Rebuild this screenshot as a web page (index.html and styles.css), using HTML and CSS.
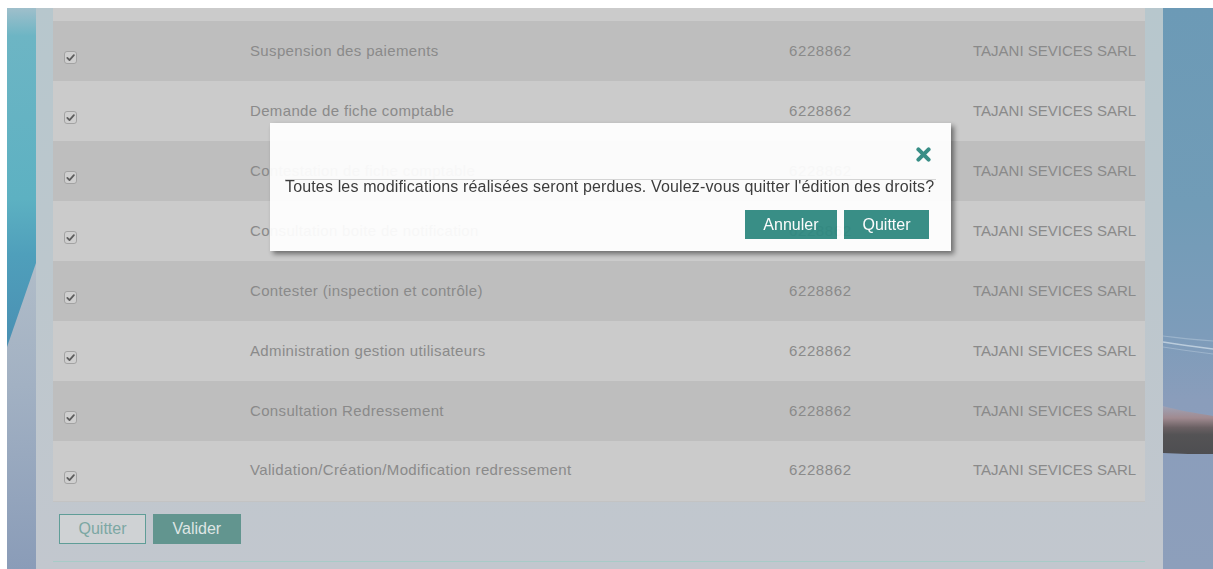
FILE: index.html
```html
<!DOCTYPE html>
<html lang="fr">
<head>
<meta charset="utf-8">
<title>Gestion des droits</title>
<link rel="stylesheet" href="styles.css">
</head>
<body>
<div class="page">
  <div class="scene scene-left" aria-hidden="true">
    <svg viewBox="0 0 29 561" preserveAspectRatio="none">
      <defs>
        <linearGradient id="sky-left" x1="0" y1="0" x2="0" y2="1">
          <stop offset="0" stop-color="#9fbfcb"/>
          <stop offset="0.05" stop-color="#6db5c4"/>
          <stop offset="0.34" stop-color="#5db1c2"/>
          <stop offset="0.44" stop-color="#4f9fbb"/>
          <stop offset="0.6" stop-color="#4a90b3"/>
        </linearGradient>
        <linearGradient id="ground-left" x1="0" y1="0" x2="0" y2="1">
          <stop offset="0" stop-color="#b0bcc8"/>
          <stop offset="0.4" stop-color="#a2b1c3"/>
          <stop offset="1" stop-color="#8a9cb8"/>
        </linearGradient>
      </defs>
      <rect width="29" height="561" fill="url(#sky-left)"/>
      <polygon points="29,255 29,561 0,561 0,339" fill="url(#ground-left)"/>
    </svg>
  </div>

  <main class="panel">
    <table class="rights">
      <colgroup>
        <col class="col-check">
        <col class="col-label">
        <col class="col-code">
        <col class="col-company">
      </colgroup>
      <tbody>
        <tr class="row-tail"><td colspan="4"></td></tr>
        <tr>
          <td class="cell-check"><span class="check"><svg viewBox="0 0 13 13"><rect x="0.5" y="0.5" width="12" height="12" rx="2.5" class="check-box"/><path d="M3.3 6.9 L5.5 9.1 L9.9 4.2" class="check-mark"/></svg></span></td>
          <td class="cell-label">Suspension des paiements</td>
          <td class="cell-code">6228862</td>
          <td>TAJANI SEVICES SARL</td>
        </tr>
        <tr>
          <td class="cell-check"><span class="check"><svg viewBox="0 0 13 13"><rect x="0.5" y="0.5" width="12" height="12" rx="2.5" class="check-box"/><path d="M3.3 6.9 L5.5 9.1 L9.9 4.2" class="check-mark"/></svg></span></td>
          <td class="cell-label">Demande de fiche comptable</td>
          <td class="cell-code">6228862</td>
          <td>TAJANI SEVICES SARL</td>
        </tr>
        <tr>
          <td class="cell-check"><span class="check"><svg viewBox="0 0 13 13"><rect x="0.5" y="0.5" width="12" height="12" rx="2.5" class="check-box"/><path d="M3.3 6.9 L5.5 9.1 L9.9 4.2" class="check-mark"/></svg></span></td>
          <td class="cell-label">Contestation de fiche comptable</td>
          <td class="cell-code">6228862</td>
          <td>TAJANI SEVICES SARL</td>
        </tr>
        <tr>
          <td class="cell-check"><span class="check"><svg viewBox="0 0 13 13"><rect x="0.5" y="0.5" width="12" height="12" rx="2.5" class="check-box"/><path d="M3.3 6.9 L5.5 9.1 L9.9 4.2" class="check-mark"/></svg></span></td>
          <td class="cell-label">Consultation boite de notification</td>
          <td class="cell-code">6228862</td>
          <td>TAJANI SEVICES SARL</td>
        </tr>
        <tr>
          <td class="cell-check"><span class="check"><svg viewBox="0 0 13 13"><rect x="0.5" y="0.5" width="12" height="12" rx="2.5" class="check-box"/><path d="M3.3 6.9 L5.5 9.1 L9.9 4.2" class="check-mark"/></svg></span></td>
          <td class="cell-label">Contester (inspection et contrôle)</td>
          <td class="cell-code">6228862</td>
          <td>TAJANI SEVICES SARL</td>
        </tr>
        <tr>
          <td class="cell-check"><span class="check"><svg viewBox="0 0 13 13"><rect x="0.5" y="0.5" width="12" height="12" rx="2.5" class="check-box"/><path d="M3.3 6.9 L5.5 9.1 L9.9 4.2" class="check-mark"/></svg></span></td>
          <td class="cell-label">Administration gestion utilisateurs</td>
          <td class="cell-code">6228862</td>
          <td>TAJANI SEVICES SARL</td>
        </tr>
        <tr>
          <td class="cell-check"><span class="check"><svg viewBox="0 0 13 13"><rect x="0.5" y="0.5" width="12" height="12" rx="2.5" class="check-box"/><path d="M3.3 6.9 L5.5 9.1 L9.9 4.2" class="check-mark"/></svg></span></td>
          <td class="cell-label">Consultation Redressement</td>
          <td class="cell-code">6228862</td>
          <td>TAJANI SEVICES SARL</td>
        </tr>
        <tr>
          <td class="cell-check"><span class="check"><svg viewBox="0 0 13 13"><rect x="0.5" y="0.5" width="12" height="12" rx="2.5" class="check-box"/><path d="M3.3 6.9 L5.5 9.1 L9.9 4.2" class="check-mark"/></svg></span></td>
          <td class="cell-label">Validation/Création/Modification redressement</td>
          <td class="cell-code">6228862</td>
          <td>TAJANI SEVICES SARL</td>
        </tr>
      </tbody>
    </table>

    <div class="actions">
      <button type="button" class="btn btn-outline">Quitter</button>
      <button type="button" class="btn btn-fill">Valider</button>
    </div>
    <div class="panel-foot"></div>
  </main>

  <div class="scene scene-right" aria-hidden="true">
    <svg viewBox="0 0 50 561" preserveAspectRatio="none">
      <defs>
        <linearGradient id="sky-right" x1="0" y1="0" x2="0" y2="1">
          <stop offset="0" stop-color="#6c9ab6"/>
          <stop offset="0.35" stop-color="#719cb7"/>
          <stop offset="0.58" stop-color="#7d9cba"/>
          <stop offset="0.7" stop-color="#8a9dbb"/>
          <stop offset="1" stop-color="#8d9fbb"/>
        </linearGradient>
        <linearGradient id="hand" x1="0" y1="0" x2="0" y2="1">
          <stop offset="0" stop-color="#9fa3b6"/>
          <stop offset="0.25" stop-color="#a08a90"/>
          <stop offset="0.45" stop-color="#6a6063"/>
          <stop offset="0.6" stop-color="#545355"/>
          <stop offset="1" stop-color="#4e4e51"/>
        </linearGradient>
      </defs>
      <rect width="50" height="561" fill="url(#sky-right)"/>
      <path d="M0 334 C18 337 34 339 50 341" class="streak"/>
      <path d="M0 339 C18 342 34 344 50 346" class="streak streak-soft"/>
      <path d="M0 328 C18 330 34 332 50 333" class="streak streak-soft"/>
      <path d="M0 398 C14 402 32 405 50 408 L50 446 C34 446 16 446 0 445 Z" fill="url(#hand)"/>
    </svg>
  </div>
</div>

<div class="modal" role="dialog" aria-modal="true">
  <div class="modal-head">
    <button type="button" class="modal-close" aria-label="Fermer">
      <svg viewBox="0 0 15 15"><path d="M2.4 2.4 L12.6 12.6 M12.6 2.4 L2.4 12.6"/></svg>
    </button>
  </div>
  <p class="modal-text">Toutes les modifications réalisées seront perdues. Voulez-vous quitter l'édition des droits?</p>
  <div class="modal-actions">
    <button type="button" class="modal-btn">Annuler</button>
    <button type="button" class="modal-btn">Quitter</button>
  </div>
</div>
</body>
</html>
```

FILE: styles.css
```css
* {
  box-sizing: border-box;
}

html,
body {
  margin: 0;
  height: 100%;
}

body {
  background: #fff;
  font-family: "Liberation Sans", Arial, sans-serif;
  overflow: hidden;
}

/* page frame: scenery on both sides, content panel in between */
.page {
  display: flex;
  height: calc(100vh - 8px);
  margin: 8px 0 0 7px;
  overflow: hidden;
}

.scene-left {
  flex: 0 0 29px;
}

.scene-right {
  flex: 1 1 auto;
}

.scene svg {
  display: block;
  width: 100%;
  height: 100%;
}

.streak {
  fill: none;
  stroke: rgba(226, 236, 244, 0.6);
  stroke-width: 1.4;
}

.streak-soft {
  stroke: rgba(210, 224, 236, 0.35);
  stroke-width: 1.2;
}

.panel {
  flex: 0 0 1127px;
  display: flex;
  flex-direction: column;
  padding: 0 18px 0 17px;
  background: linear-gradient(180deg, #b7c7cd 0%, #bcc7cd 45%, #c2c7ce 100%);
}

/* rights table */
.rights {
  width: 100%;
  border-collapse: collapse;
  table-layout: fixed;
  font-size: 15px;
  color: #8a8a8a;
}

.col-check {
  width: 187px;
}

.col-label {
  width: 539px;
}

.col-code {
  width: 184px;
}

.col-company {
  width: 182px;
}

.rights tr {
  background: #cbcbcb;
}

.rights tr:nth-child(even) {
  background: #bebebe;
}

.rights td {
  height: 60px;
  padding: 0 10px 2px;
  vertical-align: middle;
  white-space: nowrap;
}

.rights .row-tail td {
  height: 13px;
  padding: 0;
}

.rights tr:last-child td {
  border-bottom: 1px solid #c3c3c3;
}

.rights td.cell-check {
  padding-left: 11px;
}

.rights td.cell-label {
  letter-spacing: 0.35px;
}

.rights td.cell-code {
  letter-spacing: 0.6px;
}

.check {
  display: block;
  width: 13px;
  height: 13px;
  margin-top: 15px;
}

.check svg {
  display: block;
  width: 13px;
  height: 13px;
}

.check-box {
  fill: #cfcfcf;
  stroke: #a3a3a3;
  stroke-width: 1;
}

.check-mark {
  fill: none;
  stroke: #5e5e5e;
  stroke-width: 1.8;
  stroke-linecap: round;
  stroke-linejoin: round;
}

/* form buttons under the table */
.actions {
  display: flex;
  gap: 7px;
  padding: 12px 0 0 6px;
}

.btn {
  height: 30px;
  padding: 0 18.5px;
  border: 1px solid;
  border-radius: 0;
  font-family: "Liberation Sans", Arial, sans-serif;
  font-size: 16px;
}

.btn-outline {
  background: #cfd2d4;
  border-color: #5f9d97;
  color: #7ca7a3;
}

.btn-fill {
  background: #62958f;
  border-color: #62958f;
  color: #dee5e4;
}

.panel-foot {
  flex: 1;
  margin-top: 17px;
  border-top: 1px solid #a8cbc7;
}

/* confirmation dialog */
.modal {
  position: fixed;
  left: 270px;
  top: 123px;
  width: 681px;
  padding: 0 15px 12px;
  background: #fff;
  opacity: 0.93;
  box-shadow: 3px 3px 5px rgba(0, 0, 0, 0.5);
}

.modal-head {
  display: flex;
  justify-content: flex-end;
  align-items: flex-start;
  height: 57px;
  padding-top: 24px;
  border-bottom: 1px solid #d6d6d6;
}

.modal-close {
  width: 15px;
  height: 15px;
  margin-right: 5px;
  padding: 0;
  border: 0;
  background: none;
}

.modal-close svg {
  display: block;
  width: 15px;
  height: 15px;
}

.modal-close path {
  fill: none;
  stroke: #2e8a82;
  stroke-width: 4;
  stroke-linecap: round;
}

.modal-text {
  margin: -2px 0 0;
  font-size: 16px;
  line-height: 18px;
  letter-spacing: 0.15px;
  white-space: nowrap;
  color: #333;
}

.modal-actions {
  display: flex;
  justify-content: flex-end;
  gap: 7px;
  margin-top: 14px;
  padding-right: 7px;
}

.modal-btn {
  height: 29px;
  padding: 0 18.5px;
  border: 0;
  border-radius: 0;
  background: #2e8981;
  color: #fff;
  font-family: "Liberation Sans", Arial, sans-serif;
  font-size: 16px;
}
```
